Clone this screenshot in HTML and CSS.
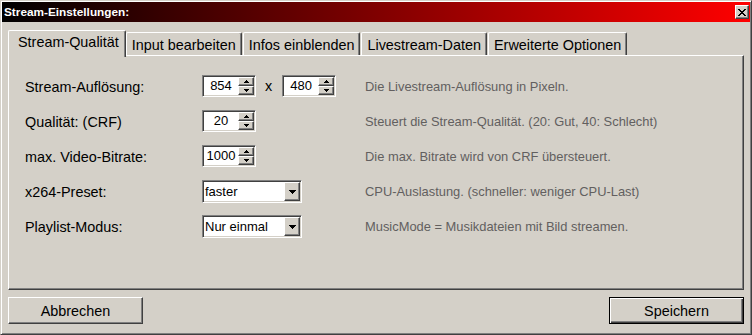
FILE: index.html
```html
<!DOCTYPE html>
<html lang="de">
<head>
    <meta charset="UTF-8">
    <meta name="viewport" content="width=device-width, initial-scale=1.0">
    <title>Stream-Einstellungen</title>
    <link rel="stylesheet" href="styles.css">
</head>
<body>
    <div class="window">
        <div class="titlebar">
            <span class="title">Stream-Einstellungen:</span>
            <button class="close-btn" title="Schließen">
                <svg width="8" height="7" viewBox="0 0 8 7" shape-rendering="crispEdges">
                    <path d="M0 0h2v1h1v1h2V1h1V0h2v1H7v1H6v1H5v1h1v1h1v1h1v1H6V6H5V5H3v1H2v1H0V6h1V5h1V4h1V3H2V2H1V1H0z"/>
                </svg>
            </button>
        </div>

        <div class="tabs">
            <div class="tab active">Stream-Qualität</div>
            <div class="tab">Input bearbeiten</div>
            <div class="tab">Infos einblenden</div>
            <div class="tab">Livestream-Daten</div>
            <div class="tab">Erweiterte Optionen</div>
        </div>

        <div class="panel">
            <div class="form-grid">
                <!-- Auflösung -->
                <span class="label">Stream-Auflösung:</span>
                <div class="controls">
                    <div class="spin">
                        <span class="spin-value">854</span>
                        <div class="spin-buttons">
                            <span class="spin-btn"><svg width="5" height="3" shape-rendering="crispEdges"><path d="M2 0h1v1h1v1h1v1H0V2h1V1h1z"/></svg></span>
                            <span class="spin-btn"><svg width="5" height="3" shape-rendering="crispEdges"><path d="M0 0h5v1H4v1H3v1H2V2H1V1H0z"/></svg></span>
                        </div>
                    </div>
                    <span class="times">x</span>
                    <div class="spin">
                        <span class="spin-value">480</span>
                        <div class="spin-buttons">
                            <span class="spin-btn"><svg width="5" height="3" shape-rendering="crispEdges"><path d="M2 0h1v1h1v1h1v1H0V2h1V1h1z"/></svg></span>
                            <span class="spin-btn"><svg width="5" height="3" shape-rendering="crispEdges"><path d="M0 0h5v1H4v1H3v1H2V2H1V1H0z"/></svg></span>
                        </div>
                    </div>
                </div>
                <span class="hint">Die Livestream-Auflösung in Pixeln.</span>

                <!-- CRF -->
                <span class="label">Qualität: (CRF)</span>
                <div class="controls">
                    <div class="spin">
                        <span class="spin-value">20</span>
                        <div class="spin-buttons">
                            <span class="spin-btn"><svg width="5" height="3" shape-rendering="crispEdges"><path d="M2 0h1v1h1v1h1v1H0V2h1V1h1z"/></svg></span>
                            <span class="spin-btn"><svg width="5" height="3" shape-rendering="crispEdges"><path d="M0 0h5v1H4v1H3v1H2V2H1V1H0z"/></svg></span>
                        </div>
                    </div>
                </div>
                <span class="hint">Steuert die Stream-Qualität. (20: Gut, 40: Schlecht)</span>

                <!-- Bitrate -->
                <span class="label">max. Video-Bitrate:</span>
                <div class="controls">
                    <div class="spin">
                        <span class="spin-value">1000</span>
                        <div class="spin-buttons">
                            <span class="spin-btn"><svg width="5" height="3" shape-rendering="crispEdges"><path d="M2 0h1v1h1v1h1v1H0V2h1V1h1z"/></svg></span>
                            <span class="spin-btn"><svg width="5" height="3" shape-rendering="crispEdges"><path d="M0 0h5v1H4v1H3v1H2V2H1V1H0z"/></svg></span>
                        </div>
                    </div>
                </div>
                <span class="hint">Die max. Bitrate wird von CRF übersteuert.</span>

                <!-- Preset -->
                <span class="label">x264-Preset:</span>
                <div class="controls">
                    <div class="combo">
                        <span class="combo-value">faster</span>
                        <span class="combo-btn"><svg width="7" height="4" shape-rendering="crispEdges"><path d="M0 0h7v1H6v1H5v1H4v1H3V3H2V2H1V1H0z"/></svg></span>
                    </div>
                </div>
                <span class="hint">CPU-Auslastung. (schneller: weniger CPU-Last)</span>

                <!-- Playlist -->
                <span class="label">Playlist-Modus:</span>
                <div class="controls">
                    <div class="combo">
                        <span class="combo-value">Nur einmal</span>
                        <span class="combo-btn"><svg width="7" height="4" shape-rendering="crispEdges"><path d="M0 0h7v1H6v1H5v1H4v1H3V3H2V2H1V1H0z"/></svg></span>
                    </div>
                </div>
                <span class="hint">MusicMode = Musikdateien mit Bild streamen.</span>
            </div>
        </div>

        <div class="footer">
            <button class="btn">Abbrechen</button>
            <button class="btn default">Speichern</button>
        </div>
    </div>
</body>
</html>
```

FILE: styles.css
```css
* {
    box-sizing: border-box;
}
body {
    margin: 0;
    background-color: #d4d0c8;
    font-family: "Liberation Sans", Arial, sans-serif;
    color: #000;
}
.window {
    width: 752px;
    height: 335px;
    background-color: #d4d0c8;
    border: 1px solid;
    border-color: #d4d0c8 #404040 #404040 #d4d0c8;
    box-shadow: inset 1px 1px #fff, inset -1px -1px #808080;
    padding: 1px;
    display: flex;
    flex-direction: column;
}

/* Titelleiste */
.titlebar {
    height: 20px;
    background: linear-gradient(to right, #000000, #ff0000);
    display: flex;
    align-items: center;
    justify-content: space-between;
    padding: 0 1px 0 2px;
}
.title {
    color: #fff;
    font-weight: bold;
    font-size: 11.8px;
}
.close-btn {
    width: 14px;
    height: 14px;
    padding: 0;
    background-color: #d4d0c8;
    border: 1px solid;
    border-color: #fff #404040 #404040 #fff;
    box-shadow: inset -1px -1px #808080;
    display: flex;
    align-items: center;
    justify-content: center;
}

/* Reiter */
.tabs {
    display: flex;
    align-items: flex-end;
    height: 27px;
    margin: 8px 6px -2px;
    position: relative;
    z-index: 1;
}
.tab {
    height: 23px;
    margin-bottom: 2px;
    padding: 0 5px;
    margin-left: 1px;
    font-size: 14.4px;
    line-height: 23px;
    padding-top: 1px;
    white-space: nowrap;
    background-color: #d4d0c8;
    border-top: 1px solid #fff;
    border-left: 1px solid #fff;
    border-right: 1px solid #404040;
    box-shadow: inset -1px 0 #808080;
    border-radius: 2px 2px 0 0;
}
.tab.active {
    height: 27px;
    margin: 0;
    padding: 0 6px 0 9px;
    line-height: 22px;
}
.tab.active + .tab {
    margin-left: 0;
}

/* Inhalt */
.panel {
    height: 235px;
    margin: 0 6px;
    border: 1px solid;
    border-color: #fff #404040 #404040 #fff;
    box-shadow: inset -1px -1px #808080;
    padding: 19px 0 0 16px;
}
.form-grid {
    display: grid;
    grid-template-columns: 177px 163px auto;
    grid-auto-rows: 23px;
    row-gap: 12px;
}
.label {
    align-self: center;
    font-size: 14.4px;
    padding-top: 1px;
}
.hint {
    align-self: center;
    font-size: 12.9px;
    color: #625f5f;
}
.controls {
    display: flex;
    align-items: flex-start;
}
.times {
    font-size: 14.4px;
    line-height: 22px;
    margin: 0 10px 0 9px;
}

/* Spin-Felder */
.spin {
    width: 54px;
    height: 22px;
    display: flex;
    background-color: #fff;
    border: 1px solid;
    border-color: #808080 #fff #fff #808080;
    box-shadow: inset 1px 1px #404040, inset -1px -1px #d4d0c8;
    padding: 1px;
}
.spin-value {
    flex: 1;
    text-align: center;
    font-size: 13px;
    line-height: 18px;
}
.spin-buttons {
    width: 16px;
    display: flex;
    flex-direction: column;
}
.spin-btn {
    height: 9px;
    background-color: #d4d0c8;
    border: 1px solid;
    border-color: #fff #404040 #404040 #fff;
    box-shadow: inset -1px -1px #808080;
    display: flex;
    align-items: center;
    justify-content: center;
}
.spin-btn svg {
    display: block;
}

/* Auswahllisten */
.combo {
    width: 100px;
    height: 23px;
    display: flex;
    background-color: #fff;
    border: 1px solid;
    border-color: #808080 #fff #fff #808080;
    box-shadow: inset 1px 1px #404040, inset -1px -1px #d4d0c8;
    padding: 1px;
}
.combo-value {
    flex: 1;
    font-size: 13px;
    line-height: 19px;
    padding-left: 1px;
}
.combo-btn {
    width: 16px;
    background-color: #d4d0c8;
    border: 1px solid;
    border-color: #fff #404040 #404040 #fff;
    box-shadow: inset -1px -1px #808080;
    display: flex;
    align-items: center;
    justify-content: center;
}
.combo-btn svg {
    display: block;
}

/* Schaltflächen */
.footer {
    display: flex;
    justify-content: space-between;
    margin-top: 7px;
    padding: 0 6px;
}
.btn {
    width: 135px;
    height: 27px;
    font-family: "Liberation Sans", Arial, sans-serif;
    font-size: 14.4px;
    color: #000;
    background-color: #d4d0c8;
    border: 1px solid;
    border-color: #fff #404040 #404040 #fff;
    box-shadow: inset -1px -1px #808080;
    padding: 0;
}
.btn.default {
    border-color: #000;
    box-shadow: inset 1px 1px #fff, inset -1px -1px #404040, inset -2px -2px #808080;
}
```
